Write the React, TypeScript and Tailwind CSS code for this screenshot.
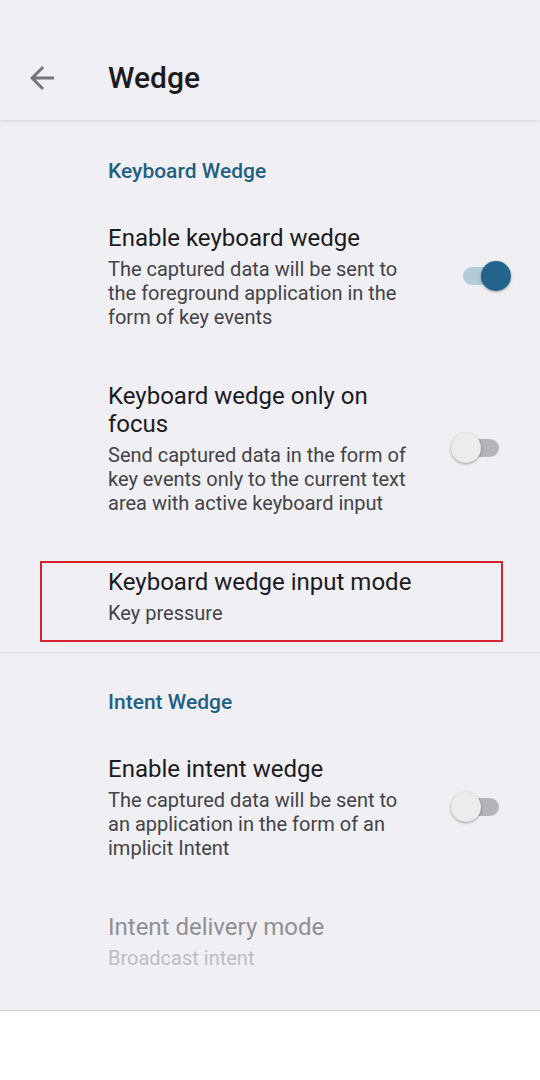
import React from "react";

const font = { fontFamily: "Roboto, 'Noto Sans', Arial, sans-serif" };

function Toggle({ on }: { on: boolean }) {
  return (
    <div className="relative h-[30px] w-[60px] shrink-0">
      <div
        className={
          on
            ? "absolute left-[12px] top-[6px] h-[18px] w-[36px] rounded-full bg-[#b3cad8]"
            : "absolute left-[12px] top-[6px] h-[18px] w-[36px] rounded-full bg-[#b4b4b9]"
        }
      />
      <div
        className={
          on
            ? "absolute left-[30px] top-0 h-[30px] w-[30px] rounded-full bg-[#22648a] shadow-[0_1px_3px_rgba(0,0,0,0.35)]"
            : "absolute left-0 top-0 h-[30px] w-[30px] rounded-full bg-[#ececec] shadow-[0_1px_3px_rgba(0,0,0,0.35)]"
        }
      />
    </div>
  );
}

function SectionHeader({ text, top }: { text: string; top: string }) {
  return (
    <div className={`${top} pb-[15px] pl-[108px]`}>
      <div className="text-[21px] font-medium leading-[24px] text-[#1f6183]">{text}</div>
    </div>
  );
}

type Pref = {
  title: string;
  summary: string;
  toggle?: boolean;
  disabled?: boolean;
};

function PrefRow({ pref, highlight, extraBottom }: { pref: Pref; highlight?: boolean; extraBottom?: boolean }) {
  return (
    <div className={`relative flex items-center pl-[108px] pt-[26px] ${extraBottom ? "pb-[40px]" : "pb-[27px]"}`}>
      <div className="w-[312px]">
        <div className={`text-[24px] leading-[28px] ${pref.disabled ? "text-[#8f8f94]" : "text-[#1b1b1f]"}`}>
          {pref.title}
        </div>
        <div className={`mt-[5px] text-[20px] leading-[24px] ${pref.disabled ? "text-[#bdbdc2]" : "text-[#434348]"}`}>
          {pref.summary}
        </div>
      </div>
      {pref.toggle !== undefined && (
        <div className="ml-auto mr-[29px] -mt-[2px]">
          <Toggle on={pref.toggle} />
        </div>
      )}
      {highlight && (
        <div className="absolute left-[40px] top-[19px] h-[81px] w-[463px] border-2 border-[#d3242f]" />
      )}
    </div>
  );
}

export default function App() {
  const keyboardPrefs: Pref[] = [
    {
      title: "Enable keyboard wedge",
      summary: "The captured data will be sent to the foreground application in the form of key events",
      toggle: true,
    },
    {
      title: "Keyboard wedge only on focus",
      summary: "Send captured data in the form of key events only to the current text area with active keyboard input",
      toggle: false,
    },
  ];

  return (
    <div className="min-h-[1080px] w-[540px] bg-white" style={font}>
      <div className="bg-[#f0eff4] border-b border-[#cdcdd0]">
        {/* Toolbar */}
        <div className="relative z-10 flex h-[120px] items-center pt-[36px] shadow-[0_1px_3px_rgba(0,0,0,0.12)]">
          <svg className="ml-[24px] h-[36px] w-[36px]" viewBox="0 0 24 24" fill="#767679">
            <path d="M20 11H7.83l5.59-5.59L12 4l-8 8 8 8 1.41-1.41L7.83 13H20v-2z" />
          </svg>
          <h1 className="ml-[48px] text-[30px] font-medium leading-[36px] text-[#1b1b1f]">Wedge</h1>
        </div>

        {/* Keyboard Wedge */}
        <SectionHeader text="Keyboard Wedge" top="pt-[39px]" />
        {keyboardPrefs.map((p) => (
          <PrefRow key={p.title} pref={p} />
        ))}
        <PrefRow pref={{ title: "Keyboard wedge input mode", summary: "Key pressure" }} highlight />

        <div className="h-px bg-[#dcdce0]" />

        {/* Intent Wedge */}
        <SectionHeader text="Intent Wedge" top="pt-[37px]" />
        <PrefRow
          pref={{
            title: "Enable intent wedge",
            summary: "The captured data will be sent to an application in the form of an implicit Intent",
            toggle: false,
          }}
        />
        <PrefRow pref={{ title: "Intent delivery mode", summary: "Broadcast intent", disabled: true }} extraBottom />
      </div>
    </div>
  );
}
